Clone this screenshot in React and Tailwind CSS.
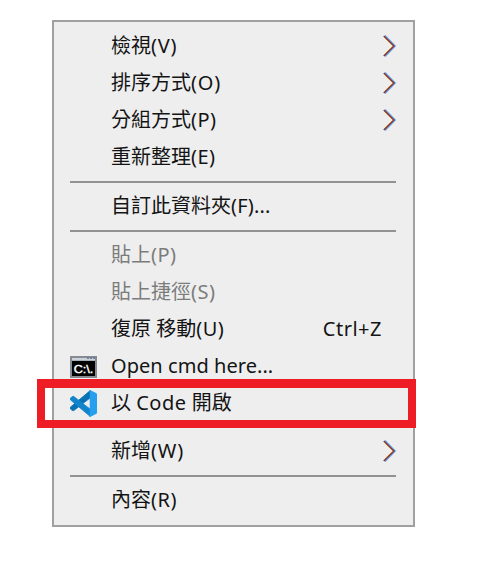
const CJK = "font-['Noto_Sans','Noto_Sans_CJK_TC',sans-serif]";

function Chevron() {
  return (
    <svg width="13" height="22" viewBox="0 0 13 22" fill="none" className="shrink-0">
      <path d="M0.6 2L9.6 11L0.6 20" stroke="#f6efb0" strokeWidth="1.2" />
      <path d="M2 0.6L12.2 11L2 21.4" stroke="#62aaf0" strokeWidth="1.5" />
      <path d="M0.8 1L10.9 11L0.8 21" stroke="#8a3030" strokeWidth="1.5" />
    </svg>
  );
}

function CmdIcon() {
  return (
    <svg width="27" height="22" viewBox="0 0 27 22">
      <rect width="27" height="22" fill="#858b91" />
      <rect x="2" y="2" width="23" height="2.5" fill="#cbd2da" />
      <path d="M17 2.2h2M20 2.2h2M23 2.2h2" stroke="#536b92" strokeWidth="1.2" />
      <rect x="2" y="5" width="23" height="15" fill="#000" />
      <text x="3.8" y="16.8" fill="#fff" stroke="#fff" strokeWidth="0.4" fontSize="11.5" textLength="19.5" lengthAdjust="spacingAndGlyphs" fontFamily="Liberation Sans">
        C:\.
      </text>
    </svg>
  );
}

function CodeIcon() {
  return (
    <svg width="27" height="27" viewBox="0 0 100 100">
      <path fill="#0872b5" stroke="#0872b5" strokeWidth="3" d="M75 2L1.3 63.58c-1.81 1.65-1.81 4.51 0 6.17l7.51 6c1.49 1.35 3.72 1.45 5.32.24L75 29Z" />
      <path fill="#1284cc" stroke="#1284cc" strokeWidth="3" d="M75 98L1.3 36.42c-1.81-1.65-1.81-4.51 0-6.17l7.51-6c1.49-1.35 3.72-1.45 5.32-.24L75 71Z" />
      <path fill="#26a0ee" d="M75.86 99.13c-2.39 1.15-5.24.66-7.11-1.21 2.31 2.3 4.25.67 4.25-2.59V4.67C73 1.41 71.06-.22 68.75 2.08c1.87-1.87 4.72-2.35 7.11-1.21l20.6 9.91c2.16 1.04 3.54 3.23 3.54 5.63v67.18c0 2.4-1.38 4.59-3.54 5.63L75.86 99.13Z" />
    </svg>
  );
}

function Item({ label, latin, suffix, tracking = "tracking-[0.5px]", icon, shortcut, submenu, disabled, short }) {
  return (
    <li className={`flex items-center pl-4 pr-[17px] ${short ? "h-9" : "h-[37px]"} ${disabled ? "text-[#7c7c7c]" : "text-[#141414]"}`}>
      <span className="flex w-[41px] shrink-0 items-center">{icon}</span>
      <span className="flex-1 whitespace-pre pb-px">
        {label}
        <span className={tracking}>{latin}</span>
        {suffix}
      </span>
      {shortcut && <span className="mr-[14px] pb-px tracking-[0.5px]">{shortcut}</span>}
      {submenu && (
        <span className="pb-px">
          <Chevron />
        </span>
      )}
    </li>
  );
}

function Separator() {
  return <li className="my-[5px] ml-4 mr-[17px] h-0.5 bg-[#929292]" />;
}

export default function App() {
  return (
    <main className={`h-[564px] w-[480px] overflow-hidden bg-white pl-[52px] pt-5 text-[20px] leading-none ${CJK}`}>
      <div className="relative h-[507px] w-[363px] border-2 border-[#a0a0a0] bg-[#eeeeee] pt-1.5">
        <ul>
          <Item label="檢視" latin="(V)" tracking="tracking-[0.8px]" submenu />
          <Item label="排序方式" latin="(O)" tracking="tracking-[0.8px]" submenu />
          <Item label="分組方式" latin="(P)" submenu />
          <Item label="重新整理" latin="(E)" />
          <Separator />
          <Item label="自訂此資料夾" latin="(F)..." tracking="tracking-[0.2px]" />
          <Separator />
          <Item label="貼上" latin="(P)" disabled />
          <Item label="貼上捷徑" latin="(S)" disabled />
          <Item label="復原 移動" latin="(U)" shortcut="Ctrl+Z" />
          <Item latin="Open cmd here..." tracking="tracking-[0.05px]" icon={<CmdIcon />} />
          <Item label="以 " latin="Code" suffix=" 開啟" icon={<CodeIcon />} short />
          <Separator />
          <Item label="新增" latin="(W)" tracking="tracking-[0.8px]" submenu />
          <Separator />
          <Item label="內容" latin="(R)" />
        </ul>
        <div className="absolute left-[-17px] top-[357px] h-[49px] w-[379px] border-8 border-t-[9px] border-[#ee1c24]" />
      </div>
    </main>
  );
}
